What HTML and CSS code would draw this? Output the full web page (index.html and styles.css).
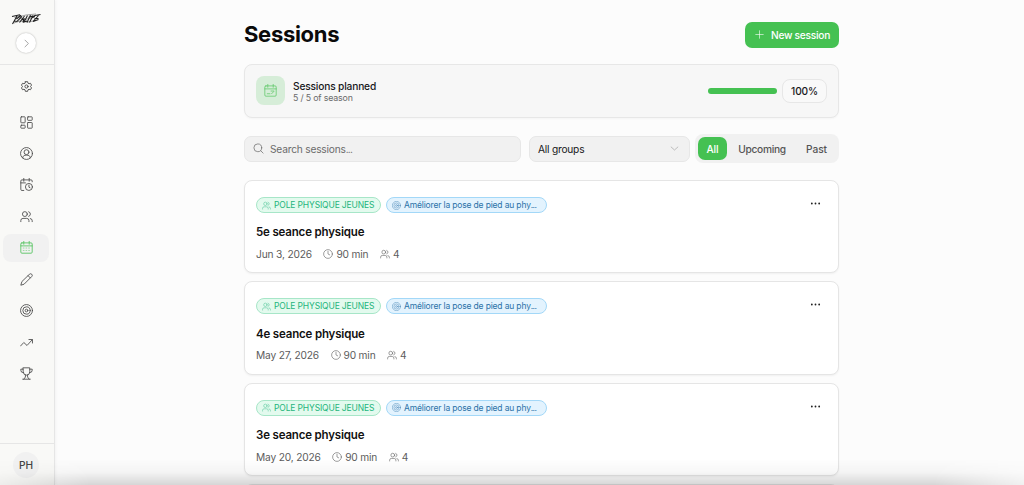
FILE: index.html
```html
<!DOCTYPE html>
<html lang="en">
<head>
    <meta charset="UTF-8">
    <meta name="viewport" content="width=device-width, initial-scale=1.0">
    <title>Sessions</title>
    <link rel="stylesheet" href="styles.css">
</head>
<body>
    <svg class="sprite">
        <symbol id="users" viewBox="0 0 24 24"><circle cx="9" cy="7.5" r="4.5"/><path d="M1.5 21.5v-2a4 4 0 0 1 4-4h7a4 4 0 0 1 4 4v2M16 3.2a4.5 4.5 0 0 1 0 8.6M19 15.7a4 4 0 0 1 3.5 4v1.8"/></symbol>
        <symbol id="target" viewBox="0 0 24 24"><circle cx="12" cy="12" r="11"/><circle cx="12" cy="12" r="6.8"/><circle cx="12" cy="12" r="2.5"/></symbol>
        <symbol id="clock" viewBox="0 0 24 24"><circle cx="12" cy="12" r="10.5"/><path d="M12 5.5V12l4 2"/></symbol>
        <symbol id="calendar" viewBox="0 0 24 24"><rect x="1.5" y="3.5" width="21" height="19" rx="2"/><path d="M1.5 9h21M7 .5V6M17 .5V6"/></symbol>
        <symbol id="dots" viewBox="0 0 24 24"><circle cx="4" cy="12" r="2"/><circle cx="12" cy="12" r="2"/><circle cx="20" cy="12" r="2"/></symbol>
    </svg>

    <div class="app">
        <aside class="sidebar">
            <div class="brand">
                <svg class="logo" viewBox="0 0 30 13">
                    <path d="M1 4.500 9 2.800M6 4 1.500 12M5.500 7l4-3.500 1 1.500-4.500 4.500-3-.5M13.500 4 8.500 10.500M10.500 8l2.500-1-1 3.500M16.500 3.500 13 10l3-1M19.500 3 16 10.500M17.500 5.500l4-1.500M22 3.500l-3.500 7M20.500 6 24 4.500M29.500 2.500 24 3.500l-2 1M27.500 3.500 22 9.500l5.500-2M23.500 6.500h4"/>
                    <path class="thin" d="M3.500 5.500 11 4l4-1L25 2M3 11l6-2 8 1 8-1.500M8 5.500l6 2 8-2"/>
                </svg>
                <button class="expand"><svg class="icon" viewBox="0 0 24 24"><path d="m8 3 9 9-9 9"/></svg></button>
            </div>
            <nav class="nav">
                <a class="nav-item settings"><svg class="icon" viewBox="0 0 24 24"><path d="M9.500 1.500h5l.7 3.200 2.300 1.300 3.200-1 2.300 4-2.300 3 2.300 3-2.300 4-3.200-1-2.300 1.300-.7 3.200h-5l-.7-3.200L6.500 18l-3.200 1L1 15l2.300-3L1 9l2.300-4 3.200 1 2.300-1.300z"/><circle cx="12" cy="12" r="3.500"/></svg></a>
                <a class="nav-item"><svg class="icon" viewBox="0 0 24 24"><rect x="1.500" y="1.500" width="8" height="11" rx="1"/><rect x="14" y="1.500" width="8.500" height="6.500" rx="1"/><rect x="1.500" y="17" width="8" height="5.500" rx="1"/><rect x="14" y="12" width="8.500" height="10.500" rx="1"/></svg></a>
                <a class="nav-item"><svg class="icon" viewBox="0 0 24 24"><circle cx="12" cy="12" r="11"/><circle cx="12" cy="9.500" r="4.500"/><path d="M5 20c0-3.500 2.500-5 7-5s7 1.500 7 5"/></svg></a>
                <a class="nav-item"><svg class="icon" viewBox="0 0 24 24"><path d="M7 23H3.500a2 2 0 0 1-2-2V5.500a2 2 0 0 1 2-2h17a2 2 0 0 1 2 2V7M1.500 9H10M7 .5V6M17 .5V6"/><circle cx="16.500" cy="16.500" r="6.500"/><path d="M16.500 13v4l2 1"/></svg></a>
                <a class="nav-item"><svg class="icon"><use href="#users"/></svg></a>
                <a class="nav-item active"><svg class="icon" viewBox="0 0 24 24"><use href="#calendar"/><path class="days" d="M6 13h12M6 17.500h12"/></svg></a>
                <a class="nav-item"><svg class="icon" viewBox="0 0 24 24"><path d="M17.500 2.300a2.900 2.900 0 0 1 4.200 4.200L7.500 20.700 1.500 22.500l1.800-6zM15 5l4 4"/></svg></a>
                <a class="nav-item"><svg class="icon"><use href="#target"/></svg></a>
                <a class="nav-item"><svg class="icon" viewBox="0 0 24 24"><path d="m1 18.500 6-6.500 6 5.500L22.500 7M16.500 6.500h6.500V13"/></svg></a>
                <a class="nav-item"><svg class="icon" viewBox="0 0 24 24"><path d="M6 1.500h12v7.500a6 6 0 0 1-12 0zM6 4H1.500v2A4.500 4.500 0 0 0 6 10.500M18 4h4.500v2a4.500 4.500 0 0 1-4.500 4.500M10 15v3.500l-3 4M14 15v3.500l3 4M5 22.500h14"/></svg></a>
            </nav>
            <div class="account"><span class="avatar">PH</span></div>
        </aside>

        <main class="content">
            <header class="page-header">
                <h1>Sessions</h1>
                <button class="new-session"><svg class="icon" viewBox="0 0 24 24"><path d="M12 2v20M2 12h20"/></svg><span>New session</span></button>
            </header>

            <section class="summary">
                <div class="summary-icon"><svg class="icon" viewBox="0 0 24 24"><use href="#calendar"/><path d="M13 13h5M6 18h5M14 18l4-4"/></svg></div>
                <div class="summary-text">
                    <strong>Sessions planned</strong>
                    <span>5 / 5 of season</span>
                </div>
                <div class="progress"></div>
                <div class="percent">100%</div>
            </section>

            <div class="filters">
                <div class="search"><svg class="icon" viewBox="0 0 24 24"><circle cx="10.500" cy="10.500" r="8.500"/><path d="m17 17 5 5"/></svg><span>Search sessions<span class="dots">...</span></span></div>
                <div class="select"><span>All groups</span><svg class="icon" viewBox="0 0 24 24"><path d="m3 8 9 8 9-8"/></svg></div>
                <div class="tabs">
                    <button class="tab selected">All</button>
                    <button class="tab upcoming">Upcoming</button>
                    <button class="tab past">Past</button>
                </div>
            </div>

            <div class="list">
                <article class="card">
                    <div class="tags">
                        <span class="tag group"><svg class="icon"><use href="#users"/></svg><span>POLE PHYSIQUE JEUNES</span></span>
                        <span class="tag goal"><svg class="icon"><use href="#target"/></svg><span>Améliorer la pose de pied au phy<span class="dots">...</span></span></span>
                        <svg class="icon more"><use href="#dots"/></svg>
                    </div>
                    <h2>5e seance physique</h2>
                    <div class="meta">
                        <span>Jun 3, 2026</span>
                        <span><svg class="icon"><use href="#clock"/></svg>90 min</span>
                        <span><svg class="icon"><use href="#users"/></svg>4</span>
                    </div>
                </article>
                <article class="card">
                    <div class="tags">
                        <span class="tag group"><svg class="icon"><use href="#users"/></svg><span>POLE PHYSIQUE JEUNES</span></span>
                        <span class="tag goal"><svg class="icon"><use href="#target"/></svg><span>Améliorer la pose de pied au phy<span class="dots">...</span></span></span>
                        <svg class="icon more"><use href="#dots"/></svg>
                    </div>
                    <h2>4e seance physique</h2>
                    <div class="meta">
                        <span>May 27, 2026</span>
                        <span><svg class="icon"><use href="#clock"/></svg>90 min</span>
                        <span><svg class="icon"><use href="#users"/></svg>4</span>
                    </div>
                </article>
                <article class="card">
                    <div class="tags">
                        <span class="tag group"><svg class="icon"><use href="#users"/></svg><span>POLE PHYSIQUE JEUNES</span></span>
                        <span class="tag goal"><svg class="icon"><use href="#target"/></svg><span>Améliorer la pose de pied au phy<span class="dots">...</span></span></span>
                        <svg class="icon more"><use href="#dots"/></svg>
                    </div>
                    <h2>3e seance physique</h2>
                    <div class="meta">
                        <span>May 20, 2026</span>
                        <span><svg class="icon"><use href="#clock"/></svg>90 min</span>
                        <span><svg class="icon"><use href="#users"/></svg>4</span>
                    </div>
                </article>
                <article class="card"></article>
            </div>
        </main>
    </div>
    <div class="fade"></div>
</body>
</html>
```

FILE: styles.css
```css
* {
    box-sizing: border-box;
}
body {
    margin: 0;
    font-family: Inter, "Liberation Sans", sans-serif;
    font-size: 10.2px;
    letter-spacing: -0.17px;
    color: #18181b;
    background: #fcfcfc;
    overflow: hidden;
}
button {
    font: inherit;
    letter-spacing: inherit;
    border: none;
    padding: 0;
}
h1, h2 {
    margin: 0;
}
.sprite {
    display: none;
}
.icon {
    width: 13px;
    height: 13px;
    flex: none;
    fill: none;
    stroke: currentColor;
    stroke-width: 1.6;
    stroke-linecap: round;
    stroke-linejoin: round;
}
.dots {
    letter-spacing: -0.8px;
}
.app {
    display: flex;
    height: 485px;
    overflow: hidden;
}

/* Sidebar */
.sidebar {
    width: 55px;
    flex: none;
    display: flex;
    flex-direction: column;
    background: #f9f9f7;
    border-right: 1px solid #e6e6e6;
    box-shadow: 1px 0 3px rgba(0, 0, 0, 0.04);
}
.brand {
    height: 65px;
    padding: 12px 2px 0 0;
    display: flex;
    flex-direction: column;
    align-items: center;
    border-bottom: 1px solid #e6e6e6;
}
.logo {
    width: 30px;
    height: 13px;
    fill: none;
    stroke: #222;
    stroke-width: 1.1;
}
.logo .thin {
    stroke-width: 0.4;
}
.expand {
    display: flex;
    align-items: center;
    justify-content: center;
    width: 20px;
    height: 20px;
    margin-top: 8px;
    border-radius: 50%;
    background: #fff;
    color: #888;
    box-shadow: 0 0 2px rgba(0, 0, 0, 0.3);
}
.expand .icon {
    width: 9px;
    height: 9px;
    stroke-width: 2;
}
.nav {
    flex: 1;
    padding: 7.6px 5px 0 3px;
}
.nav-item {
    height: 28px;
    margin-bottom: 3.45px;
    display: flex;
    align-items: center;
    justify-content: center;
    border-radius: 8px;
    color: #4a4a4a;
}
.nav-item.settings {
    margin-bottom: 7.5px;
}
.nav-item.settings .icon {
    width: 11px;
    height: 11px;
    stroke-width: 2;
}
.nav-item.active {
    background: #f1f1f1;
    color: #55c45f;
}
.days {
    stroke-dasharray: 1.5 3.5;
    opacity: 0.6;
}
.account {
    height: 42px;
    display: flex;
    align-items: center;
    justify-content: center;
    padding-right: 2px;
    border-top: 1px solid #e6e6e6;
}
.avatar {
    width: 26px;
    height: 26px;
    line-height: 27px;
    text-align: center;
    border-radius: 50%;
    background: #f1f1f1;
    color: #444;
    font-weight: 500;
}

/* Page */
.content {
    width: 595px;
    margin-left: 189px;
    padding-top: 21px;
}
.page-header {
    display: flex;
    align-items: center;
    justify-content: space-between;
    height: 27px;
}
h1 {
    font-size: 22px;
    line-height: 27px;
    font-weight: 700;
    color: #0a0a0a;
    letter-spacing: -0.3px;
}
.new-session {
    display: flex;
    align-items: center;
    width: 94px;
    height: 26px;
    padding-left: 10px;
    gap: 7px;
    border-radius: 7px;
    background: #45c152;
    color: #fff;
    font-weight: 500;
    letter-spacing: -0.27px;
}
.new-session .icon {
    width: 9px;
    height: 9px;
}
.summary {
    display: flex;
    align-items: center;
    height: 54px;
    margin-top: 16px;
    padding: 0 11px;
    border: 1px solid #e7e7e7;
    border-radius: 8px;
    background: #f7f7f7;
    box-shadow: 0 1px 2px rgba(0, 0, 0, 0.03);
}
.summary-icon {
    display: flex;
    align-items: center;
    justify-content: center;
    width: 29px;
    height: 29px;
    margin-top: -1px;
    border-radius: 8px;
    background: #d6edd8;
    color: #55c45f;
}
.summary-icon .icon {
    stroke-width: 1.3;
}
.summary-text {
    flex: 1;
    margin-left: 8px;
}
.summary-text strong {
    display: block;
    font-weight: 500;
    line-height: 14px;
}
.summary-text span {
    display: block;
    margin-top: -1px;
    font-size: 8.8px;
    line-height: 11px;
    color: #6b6b6b;
}
.progress {
    width: 69px;
    height: 6px;
    border-radius: 3px;
    background: #45c152;
}
.percent {
    width: 45px;
    height: 24px;
    margin-left: 5px;
    line-height: 23px;
    text-align: center;
    border: 1px solid #e7e7e7;
    border-radius: 8px;
    background: #f9f9f9;
    font-weight: 500;
}

/* Filters */
.filters {
    display: flex;
    align-items: center;
    height: 29px;
    margin-top: 16px;
}
.search, .select {
    display: flex;
    align-items: center;
    height: 26px;
    padding: 0 10px 0 8px;
    border: 1px solid #e7e7e7;
    border-radius: 7px;
    background: #f1f1f1;
}
.search {
    width: 277px;
    gap: 6px;
    color: #6b6b6b;
    letter-spacing: -0.2px;
}
.search .icon {
    width: 11px;
    height: 11px;
}
.select {
    width: 161px;
    margin-left: 8px;
    justify-content: space-between;
    letter-spacing: -0.22px;
}
.select .icon {
    width: 9px;
    height: 9px;
    color: #999;
}
.tabs {
    display: flex;
    align-items: center;
    width: 144px;
    height: 29px;
    margin-left: 5px;
    padding: 0 3px;
    border-radius: 8px;
    background: #f1f1f1;
}
.tab {
    height: 23px;
    border-radius: 7px;
    background: none;
    color: #555;
    font-weight: 500;
}
.tab.selected {
    width: 29px;
    background: #45c152;
    color: #fff;
}
.tab.upcoming {
    width: 70px;
    letter-spacing: -0.3px;
}
.tab.past {
    width: 39px;
    letter-spacing: -0.1px;
}

/* Session cards */
.list {
    display: flex;
    flex-direction: column;
    gap: 8px;
    margin-top: 17px;
}
.card {
    height: 93.4px;
    padding: 16px 11px 0;
    border: 1px solid #e5e5e5;
    border-radius: 8px;
    background: #fff;
    box-shadow: 0 1px 2px rgba(0, 0, 0, 0.05);
}
.tags {
    display: flex;
    align-items: center;
    height: 16px;
    gap: 5px;
}
.tag {
    display: flex;
    align-items: center;
    height: 16px;
    padding-left: 5px;
    gap: 3px;
    border-radius: 8px;
    font-size: 8.5px;
    white-space: nowrap;
}
.tag .icon {
    width: 9px;
    height: 9px;
    stroke-width: 1.4;
    opacity: 0.8;
}
.tag.group {
    width: 125px;
    border: 1px solid #a7e6c8;
    background: #e3faee;
    color: #23b57c;
    letter-spacing: -0.14px;
}
.tag.goal {
    width: 161px;
    border: 1px solid #a3d8f8;
    background: #e3f3fe;
    color: #2b72a8;
    letter-spacing: -0.16px;
}
.tag .dots {
    letter-spacing: -0.6px;
}
.more {
    width: 11px;
    height: 11px;
    margin: -3px 6px 0 auto;
    fill: #222;
    stroke: none;
}
h2 {
    margin-top: 11.4px;
    font-size: 11.5px;
    line-height: 16px;
    font-weight: 600;
    color: #111;
    letter-spacing: -0.17px;
}
.meta {
    display: flex;
    gap: 11.5px;
    margin-top: 6.6px;
    line-height: 14px;
    color: #5c5c5c;
}
.meta span {
    display: flex;
    align-items: center;
    gap: 3px;
}
.meta .icon {
    width: 10px;
    height: 10px;
    stroke-width: 1.4;
}

/* Shade over the bottom edge of the page */
.fade {
    position: absolute;
    left: 0;
    right: 0;
    bottom: 0;
    height: 26px;
    background: linear-gradient(rgba(0, 0, 0, 0), rgba(0, 0, 0, 0.03) 50%, rgba(0, 0, 0, 0.15));
    mask-image: linear-gradient(90deg, rgba(0, 0, 0, 0.3), #000 90px, #000 934px, rgba(0, 0, 0, 0.3));
    pointer-events: none;
}
```
